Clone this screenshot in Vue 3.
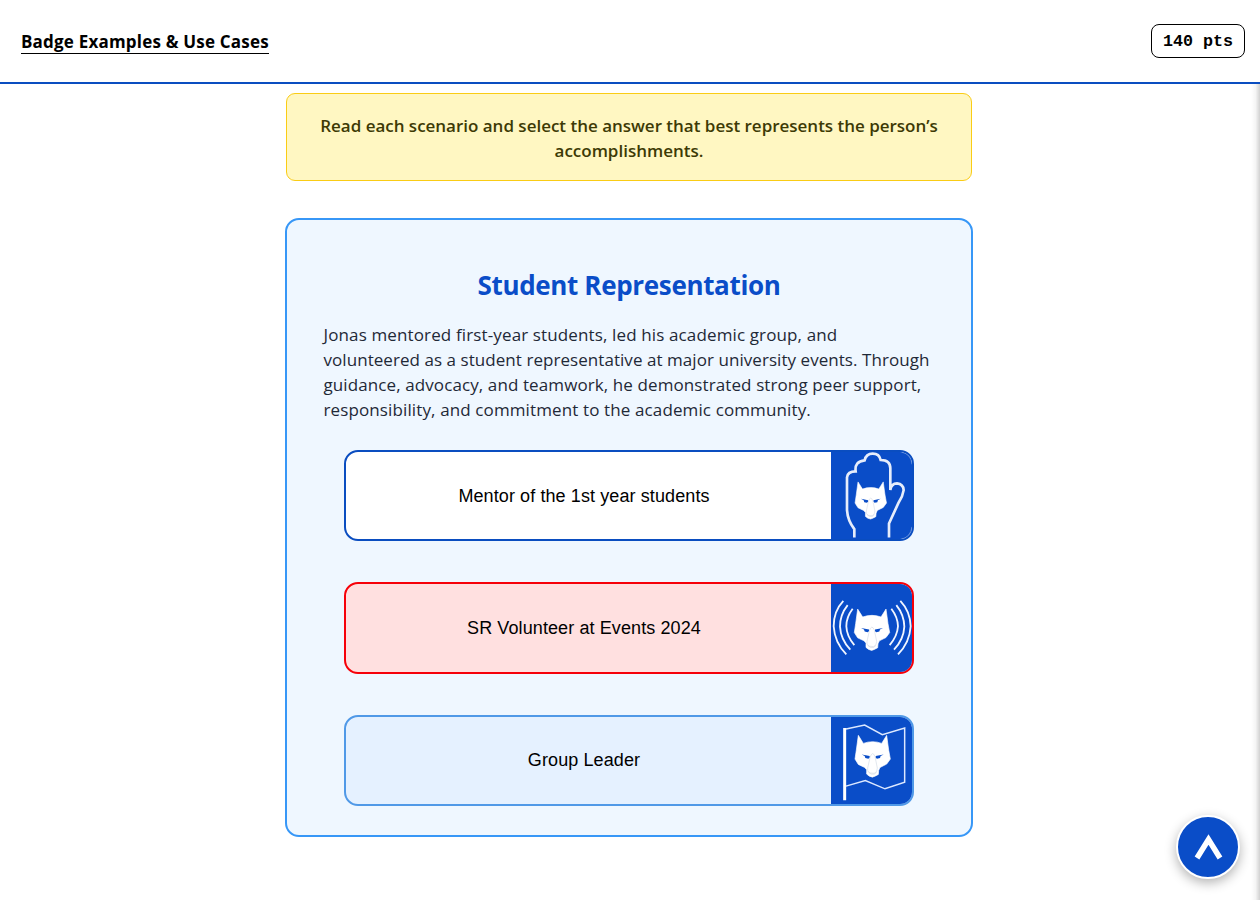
<script setup>
const intro = [
  { text: 'Read each scenario and select the answer that best represents the person’s', gap: -0.015 },
  { text: 'accomplishments.', gap: 0 },
]
const story = [
  { text: 'Jonas mentored first-year students, led his academic group, and', gap: 0.13 },
  { text: 'volunteered as a student representative at major university events. Through', gap: 0.053 },
  { text: 'guidance, advocacy, and teamwork, he demonstrated strong peer support,', gap: 0.1 },
  { text: 'responsibility, and commitment to the academic community.', gap: 0.12 },
]
const answers = [
  { label: 'Mentor of the 1st year students', kind: 'mentor', box: '33 36 243 261', wolf: 'translate(13.5 31.2) scale(.89)' },
  { label: 'SR Volunteer at Events 2024', kind: 'volunteer', box: '33 30 243 264', wolf: 'translate(0 0)' },
  { label: 'Group Leader', kind: 'leader', box: '33 33 243 261', wolf: 'translate(2 -18)' },
]
</script>

<template>
  <div class="page">
    <header class="top">
      <a class="title">Badge Examples &amp; Use Cases</a>
      <span class="points">140 pts</span>
    </header>
    <main class="content">
      <div class="notice">
        <div v-for="l in intro" :key="l.text"><span :style="{ letterSpacing: l.gap + 'px' }">{{ l.text }}</span></div>
      </div>
      <section class="card">
        <h2><span>Student Representation</span></h2>
        <div class="story">
          <div v-for="l in story" :key="l.text"><span :style="{ letterSpacing: l.gap + 'px' }">{{ l.text }}</span></div>
        </div>
        <div class="answers">
          <button v-for="a in answers" :key="a.kind" class="answer" :class="a.kind">
            <span class="label">{{ a.label }}</span>
            <svg class="badge" :viewBox="a.box" preserveAspectRatio="none">
              <rect x="30" y="28" width="250" height="272" fill="#0a4dc8" />
              <g v-if="a.kind === 'mentor'" fill="none" stroke="#e6edfb" stroke-width="8">
                <path d="M103 292V267Q83 241 81 210V112Q83 94 107 94Q103 64 134 61Q138 41 158 41Q178 41 182 60Q211 60 211 85V150Q214 130 231 130Q250 132 251 150Q248 170 236 187L207 250V292" />
                <path d="M245 36Q274 43 276 73M276 260Q272 291 244 297" stroke-width="2" opacity=".6" />
              </g>
              <g v-if="a.kind === 'volunteer'" fill="none" stroke="#f1f5ff" stroke-width="5.5">
                <path d="M70 81Q41 112 41 158Q44 208 79 243M83 94Q60 123 60 159Q62 198 91 229M98 105Q79 130 79 158Q80 188 103 215M241 81Q271 113 272 158Q269 208 234 243M229 94Q252 123 253 159Q251 198 222 229M214 105Q233 130 234 158Q232 188 209 215" />
              </g>
              <g v-if="a.kind === 'leader'" fill="none" stroke="#dce8ff" stroke-width="4.5">
                <path d="M78 69L134 57L187 86L254 66V228L195 248L136 223L78 240" />
                <path d="M74 66V282" stroke="#fff" stroke-width="9" />
              </g>
              <g :transform="a.wolf">
                <path d="M113 106L128 130Q141 125 156 125Q170 125 183 130L198 106L204 150L209 177L198 192L178 202L174 211L173 223L163 228L155 231L146 228L138 222L138 209L132 202L113 193L103 177L107 150Z" fill="#fff" stroke="#fff" stroke-width="2" />
                <path d="M123 163L147 168V173L143 176L134 174L132 168ZM189 163L165 168V173L169 176L178 174L180 168Z" fill="#0a4dc8" />
                <path d="M148 172Q155 151 163 169L170 204Q168 223 154 219Q139 220 141 204ZM144 216L151 222H161L168 216" fill="none" stroke="#cfd6e3" stroke-width="1.8" />
              </g>
            </svg>
          </button>
        </div>
      </section>
    </main>
    <div class="edge"></div>
    <button class="to-top">
      <svg viewBox="0 0 60 60"><path d="M19 41L30.5 22.5L42 41" fill="none" stroke="#fff" stroke-width="5.5" /></svg>
    </button>
  </div>
</template>

<style>
body { margin: 0; background: #fff; overflow: hidden; }
</style>

<style scoped>
.page { width: 1260px; height: 900px; position: relative; overflow: hidden; font-family: "Open Sans", "Noto Sans", sans-serif; }
.top { box-sizing: border-box; height: 84px; border-bottom: 2px solid #0a4dc0; display: flex; align-items: center; justify-content: space-between; padding: 0 15px 0 21px; }
.title { font-weight: 700; font-size: 17px; letter-spacing: .2px; line-height: 23px; height: 23px; border-bottom: 1px solid #000; color: #000; margin-top: 1px; white-space: nowrap; }
.points { box-sizing: border-box; width: 94px; height: 34px; border: 1px solid #000; border-radius: 8px; font: 700 16.7px/33px "Liberation Mono", monospace; text-align: center; white-space: pre; }
.content { width: 688px; margin: 9px 0 0 285px; }
.notice { box-sizing: border-box; margin: 0 1px; width: 686px; height: 88px; padding-top: 19px; background: #fff7c2; border: 1px solid #facc15; border-radius: 9px; color: #3d3a05; text-align: center; font-weight: 600; font-size: 17px; line-height: 25px; white-space: nowrap; }
.card { box-sizing: border-box; margin-top: 37px; height: 619px; background: #eff7ff; border: 2px solid #3797f7; border-radius: 14px; padding: 47px 36.5px 0; }
h2 { margin: 0; text-align: center; color: #0a4dc8; font-weight: 700; font-size: 26px; letter-spacing: -.34px; line-height: 36px; white-space: nowrap; }
.story { margin-top: 19px; color: #1f2937; font-size: 17px; line-height: 25px; white-space: nowrap; }
.answers { margin: 28px 20.5px 0; display: flex; flex-direction: column; gap: 41.3px; }
.answer { box-sizing: border-box; width: 570px; height: 91.2px; padding: 0; display: flex; border: 2px solid #0a4dc0; border-radius: 14px; overflow: hidden; background: #fff; font: 18px "Liberation Sans", sans-serif; letter-spacing: .1px; color: #000; align-items: stretch; }
.volunteer { border-color: #f60009; background: #ffe0e0; }
.leader { border-color: #5099e7; background: #e5f1ff; }
.label { flex: 1; display: flex; align-items: center; justify-content: center; box-sizing: border-box; padding-right: 9px; }
.mentor .label { padding-top: 1px; }
.badge { display: block; width: 81px; height: 100%; flex: none; }
.edge { position: absolute; right: 0; top: 84px; bottom: 0; width: 9px; background: linear-gradient(to right, rgba(0,0,0,0), rgba(0,0,0,.04) 50%, rgba(0,0,0,.18)); }
.to-top { position: absolute; box-sizing: border-box; left: 1176px; top: 815px; width: 64px; height: 64px; border: 2px solid #fff; border-radius: 50%; background: #0a4dc8; padding: 0; box-shadow: 0 4px 12px rgba(0,0,0,.3); }
.to-top svg { display: block; width: 60px; height: 60px; }
</style>
